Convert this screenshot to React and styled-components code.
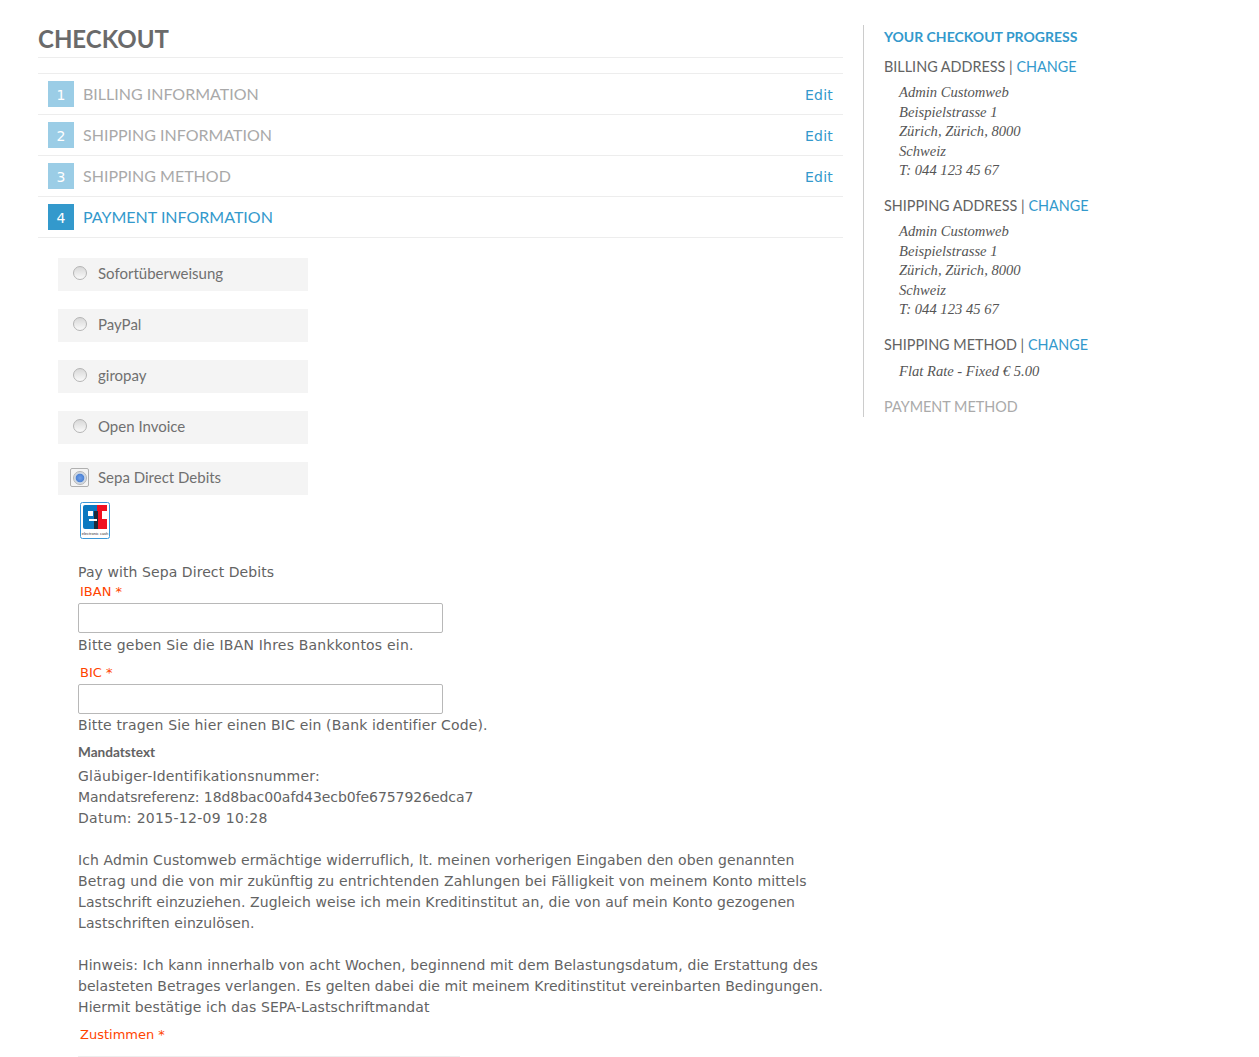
import React from 'react'
import styled, {createGlobalStyle} from 'styled-components'

const GlobalStyle = createGlobalStyle`
    html, body {
        margin: 0;
        padding: 0;
        background: #fff;
    }
    #root {
        height: 1057px;
        overflow: hidden;
    }
`;

const Page = styled.div`
    display: flex;
    align-items: flex-start;
    padding: 0 0 0 38px;
    font-family: "DejaVu Sans", sans-serif;
    font-size: 14px;
    color: #636363;
`;
const Main = styled.main`
    width: 805px;
    flex: none;
`;
const Title = styled.h1`
    margin: 0 0 15px;
    height: 58px;
    box-sizing: border-box;
    border-bottom: 1px solid #ededed;
    padding-top: 24px;
    font-family: Lato, sans-serif;
    font-size: 24px;
    line-height: 30px;
    font-weight: 700;
    color: #6a6a6a;
`;
const StepList = styled.div`
    border-top: 1px solid #ededed;
`;
const Step = styled.div`
    display: flex;
    align-items: center;
    height: 41px;
    box-sizing: border-box;
    border-bottom: 1px solid #ededed;
    padding: 0 10px;
`;
const StepNumber = styled.span`
    width: 26px;
    height: 26px;
    margin-right: 9px;
    background: ${props => props.active ? '#3399cc' : '#9bcde6'};
    color: #fff;
    font-size: 14px;
    line-height: 28px;
    text-align: center;
`;
const StepTitle = styled.span`
    flex: 1;
    padding-bottom: 2px;
    font-family: Lato, sans-serif;
    font-size: 16px;
    color: ${props => props.active ? '#3399cc' : '#a9a9a9'};
`;
const EditLink = styled.a`
    font-size: 14px;
    letter-spacing: 0.2px;
    color: #3399cc;
    position: relative;
    top: 1px;
`;
const Methods = styled.div`
    padding: 20px 0 0 20px;
`;
const Method = styled.div`
    display: flex;
    align-items: center;
    width: 250px;
    height: 33px;
    margin-bottom: 18px;
    padding: 0 0 4px 12px;
    box-sizing: border-box;
    background: #f4f4f4;
    font-family: Lato, sans-serif;
    font-size: 15px;
    color: #707070;
`;
const RadioBox = styled.span`
    display: flex;
    align-items: center;
    justify-content: center;
    width: 19px;
    height: 19px;
    margin-right: 9px;
    box-sizing: border-box;
    border: ${props => props.checked ? '1px solid #b0b0b0' : '0'};
    border-radius: 2px;
    position: relative;
    top: ${props => props.checked ? '1px' : '0'};
`;
const Radio = styled.span`
    width: 14px;
    height: 14px;
    box-sizing: border-box;
    border-radius: 50%;
    border: 1px solid #b5b5b5;
    background: ${props => props.checked
        ? 'radial-gradient(circle at 50% 50%, #6f9fe8 0, #4f84d6 45%, #c9d4e2 55%, #eee 100%)'
        : 'linear-gradient(#d8d8d8, #fafafa)'};
`;
const SepaForm = styled.div`
    margin: -11px 0 0 40px;
    width: 760px;
`;
const LogoWrap = styled.div`
    height: 37px;
    padding-left: 2px;
    margin-bottom: 23px;
    svg {
        display: block;
    }
`;
const Text = styled.div`
    line-height: 21px;
    white-space: nowrap;
    letter-spacing: ${props => props.tracking || 0}px;
`;
const Hint = styled(Text)`
    margin-top: ${props => props.gap}px;
`;
const FieldLabel = styled.label`
    display: block;
    padding-left: 2px;
    font-size: 13px;
    line-height: 20px;
    color: #ff4400;
    margin-top: ${props => props.gap || 0}px;
`;
const Input = styled.div`
    width: 365px;
    height: 30px;
    margin-top: 1px;
    box-sizing: border-box;
    border: 1px solid #b8b8b8;
    border-radius: 2px;
    background: #fff;
`;
const MandateTitle = styled.h4`
    margin: 6px 0 4px;
    font-family: Lato, sans-serif;
    font-size: 13.6px;
    line-height: 20px;
    font-weight: 700;
    color: #636363;
`;
const Blank = styled.div`
    height: 21px;
`;
const Rule = styled.div`
    width: 382px;
    margin-top: 11px;
    border-top: 1px solid #ededed;
`;
const Sidebar = styled.aside`
    width: 300px;
    margin: 25px 0 0 20px;
    padding: 0 0 0 20px;
    height: 392px;
    box-sizing: border-box;
    border-left: 1px solid #cccccc;
    font-family: Lato, sans-serif;
`;
const ProgressTitle = styled.h3`
    margin: 0;
    padding-top: 2px;
    font-size: 14px;
    line-height: 20px;
    font-weight: 700;
    color: #3399cc;
`;
const ProgressHead = styled.div`
    font-size: 14.4px;
    line-height: 20px;
    margin-top: ${props => props.gap}px;
    color: ${props => props.muted ? '#aaaaaa' : '#636363'};
    a {
        color: #3399cc;
    }
`;
const Address = styled.address`
    margin-top: ${props => props.gap || 6}px;
    padding-left: 15px;
    font-family: "Liberation Serif", serif;
    font-size: 14.6px;
    line-height: 19.5px;
    font-style: italic;
    color: #555;
`;

const steps = ['Billing Information', 'Shipping Information', 'Shipping Method', 'Payment Information']
const methods = ['Sofortüberweisung', 'PayPal', 'giropay', 'Open Invoice', 'Sepa Direct Debits']
const addressLines = ['Admin Customweb', 'Beispielstrasse 1', 'Zürich, Zürich, 8000', 'Schweiz', 'T: 044 123 45 67']
// second value is the tracking each line needs to fill its width
const mandateLines = [
    ['Gläubiger-Identifikationsnummer:', 0.2],
    ['Mandatsreferenz: 18d8bac00afd43ecb0fe6757926edca7', -0.06],
    ['Datum: 2015-12-09 10:28', 0.3],
    null,
    ['Ich Admin Customweb ermächtige widerruflich, lt. meinen vorherigen Eingaben den oben genannten', 0.09],
    ['Betrag und die von mir zukünftig zu entrichtenden Zahlungen bei Fälligkeit von meinem Konto mittels', 0.14],
    ['Lastschrift einzuziehen. Zugleich weise ich mein Kreditinstitut an, die von auf mein Konto gezogenen', 0.08],
    ['Lastschriften einzulösen.', 0.1],
    null,
    ['Hinweis: Ich kann innerhalb von acht Wochen, beginnend mit dem Belastungsdatum, die Erstattung des', 0.1],
    ['belasteten Betrages verlangen. Es gelten dabei die mit meinem Kreditinstitut vereinbarten Bedingungen.', 0.05],
    ['Hiermit bestätige ich das SEPA-Lastschriftmandat', 0.1],
]

function EcLogo() {
    return (
        <svg width="30" height="37" viewBox="0 0 30 37">
            <rect x="0.5" y="0.5" width="29" height="36" rx="2" fill="#fff" stroke="#3a97d8" />
            <path d="M3 5 Q3 3 5 3 H17 V27 H5 Q3 27 3 25 Z" fill="#0a78c0" />
            <path d="M17 3 H27 V9 H22 V17 H27 V27 H17 Z" fill="#f01020" />
            <rect x="14" y="9" width="4" height="18" fill="#1c2b3c" />
            <rect x="8" y="9" width="5" height="5" fill="#fff" />
            <rect x="9" y="17" width="8" height="2" fill="#fff" />
            <text x="15" y="33" fontSize="4" textAnchor="middle" fill="#333" fontFamily="Liberation Sans">electronic cash</text>
        </svg>
    )
}

function AddressBlock() {
    return (
        <Address>
            {addressLines.map(line => <div key={line}>{line}</div>)}
        </Address>
    )
}

export default function App() {
    return (
        <Page>
            <GlobalStyle />
            <Main>
                <Title>CHECKOUT</Title>
                <StepList>
                    {steps.map((step, i) => {
                        const active = i === 3
                        return (
                            <Step key={step}>
                                <StepNumber active={active}>{i + 1}</StepNumber>
                                <StepTitle active={active}>{step.toUpperCase()}</StepTitle>
                                {!active && <EditLink>Edit</EditLink>}
                            </Step>
                        )
                    })}
                </StepList>
                <Methods>
                    {methods.map((method, i) => {
                        const checked = i === 4
                        return (
                            <Method key={method}>
                                <RadioBox checked={checked}><Radio checked={checked} /></RadioBox>
                                {method}
                            </Method>
                        )
                    })}
                </Methods>
                <SepaForm>
                    <LogoWrap><EcLogo /></LogoWrap>
                    <Text tracking={0.08}>Pay with Sepa Direct Debits</Text>
                    <FieldLabel gap={-1}>IBAN *</FieldLabel>
                    <Input />
                    <Hint gap={2} tracking={0.2}>Bitte geben Sie die IBAN Ihres Bankkontos ein.</Hint>
                    <FieldLabel gap={7}>BIC *</FieldLabel>
                    <Input />
                    <Hint gap={1} tracking={0.15}>Bitte tragen Sie hier einen BIC ein (Bank identifier Code).</Hint>
                    <MandateTitle>Mandatstext</MandateTitle>
                    {mandateLines.map((line, i) => line
                        ? <Text key={i} tracking={line[1]}>{line[0]}</Text>
                        : <Blank key={i} />)}
                    <FieldLabel gap={7}>Zustimmen *</FieldLabel>
                    <Rule />
                </SepaForm>
            </Main>
            <Sidebar>
                <ProgressTitle>YOUR CHECKOUT PROGRESS</ProgressTitle>
                <ProgressHead gap={10}>BILLING ADDRESS | <a>CHANGE</a></ProgressHead>
                <AddressBlock />
                <ProgressHead gap={15.5}>SHIPPING ADDRESS | <a>CHANGE</a></ProgressHead>
                <AddressBlock />
                <ProgressHead gap={15.5}>SHIPPING METHOD | <a>CHANGE</a></ProgressHead>
                <Address gap={7}>Flat Rate - Fixed € 5.00</Address>
                <ProgressHead gap={15.5} muted>PAYMENT METHOD</ProgressHead>
            </Sidebar>
        </Page>
    )
}
